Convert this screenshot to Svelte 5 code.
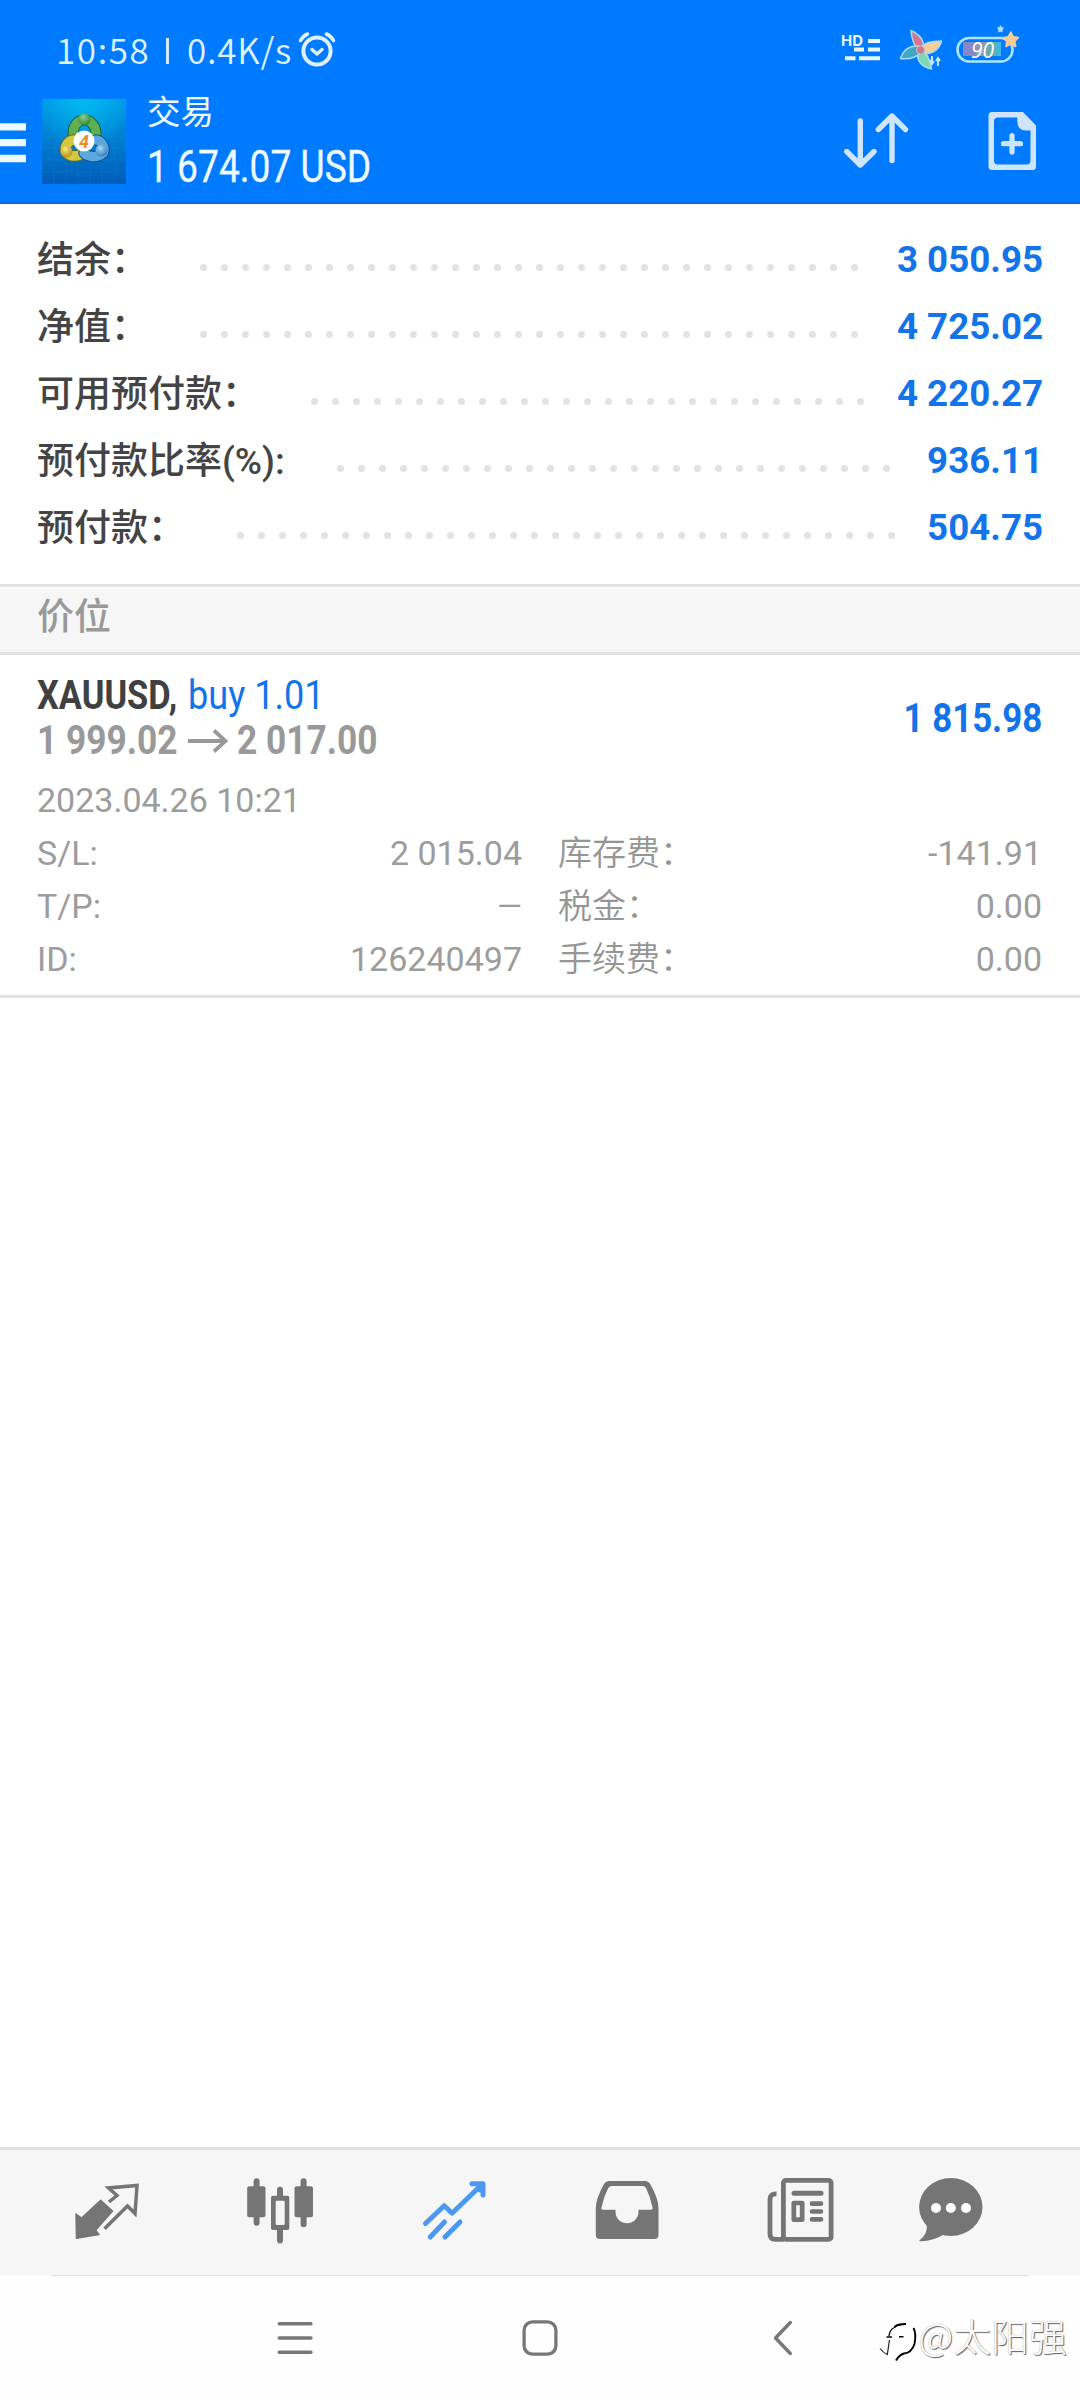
<script>
  const summary = [
    { label: '结余：', value: '3 050.95', dots: 32 },
    { label: '净值：', value: '4 725.02', dots: 32 },
    { label: '可用预付款：', value: '4 220.27', dots: 27 },
    { label: '预付款比率(%):', value: '936.11', dots: 27 },
    { label: '预付款：', value: '504.75', dots: 32 }
  ];
  const details = [
    ['S/L:', '2 015.04', '库存费：', '-141.91'],
    ['T/P:', '—', '税金：', '0.00'],
    ['ID:', '126240497', '手续费：', '0.00']
  ];
</script>

<div class="screen">
  <header>
    <div class="status">
      <span class="clock">10:58</span>
      <span class="bar"></span>
      <span class="speed">0.4K/s</span>
      <svg class="alarm" width="38" height="36" viewBox="0 0 38 36" fill="none" stroke="#dff1ff">
        <circle cx="19" cy="20" r="13.6" stroke-width="4" />
        <path d="M14 18.5l5 4.5 5-4.5" stroke-width="3.4" stroke-linecap="round" stroke-linejoin="round" />
        <path d="M2.5 9.500Q5 5 9.500 3M35.500 9.500Q33 5 28.500 3" stroke-width="3.6" stroke-linecap="round" />
      </svg>
      <svg class="tray" width="190" height="60" viewBox="835 20 190 60">
        <text x="841" y="45.500" class="hd" textLength="22" lengthAdjust="spacingAndGlyphs">HD</text>
        <path d="M868 41H880M854 49.500H864M868 49.500H880M845 58.300H855.500M859 58.300H880" stroke="#e9f6ff" stroke-width="4" />
        <g stroke="#a9d8f5" stroke-width="1.6" stroke-linejoin="round">
          <path d="M917 49Q912 42 911 30.500Q925 37 923.500 49Z" fill="#d8748f" />
          <path d="M921 47Q926 41 941.500 41Q938 54 922 54Z" fill="#f3cf98" />
          <path d="M923 51Q929 55 931.500 69Q917 66 917 52Z" fill="#7fd9b0" />
          <path d="M920 53Q914 60 900.500 58.500Q905 45 919 46Z" fill="#3fa9c4" />
        </g>
        <circle cx="920.500" cy="50" r="4" fill="#c9788e" stroke="#d9b3c9" />
        <path d="M932 56v8M930 60l2 4 2-3M938 66v-8M936 61l2-3 2 3" fill="none" stroke="#c5e6ff" stroke-width="2" />
        <rect x="957.500" y="38" width="55" height="23.500" rx="11.700" fill="none" stroke="#aee6ff" stroke-width="2.600" />
        <rect x="963" y="42" width="13" height="14" fill="#8a86c4" />
        <rect x="976" y="42" width="12" height="14" fill="#8f9bb0" />
        <rect x="988" y="42" width="7" height="14" fill="#5fb0a8" />
        <rect x="995" y="42" width="6" height="14" fill="#45b6dc" />
        <text x="971" y="57.500" class="pct">90</text>
        <path d="M1011 32l2.300 4.800 5.200.6-3.700 3.700.9 5.400-4.900-2.400-4.800 2.600.6-5.400-4-3.600 5.600-1z" fill="#f6cd92" stroke="#f6cd92" stroke-width="1.500" stroke-linejoin="round" />
        <path d="M1000.500 25l1.300 2.300 2.500.5-1.800 2 .2 2.600-2.300-1-2.300 1 .3-2.600-1.700-2 2.500-.5z" fill="#b9dbf3" />
      </svg>
    </div>
    <div class="title-row">
      <svg class="burger" width="26" height="40" viewBox="0 0 26 40"><path d="M0 3.800H26M0 19.600H26M0 35.500H26" stroke="#eef8ff" stroke-width="7.300" /></svg>
      <svg class="logo" width="84" height="85" viewBox="0 0 84 85">
        <defs>
          <linearGradient id="sky" x1="0" y1="0" x2="0" y2="1"><stop offset="0" stop-color="#0095e8" /><stop offset=".45" stop-color="#007fd2" /><stop offset="1" stop-color="#005bb8" /></linearGradient>
          <radialGradient id="shine" cx=".5" cy="0" r=".6"><stop offset="0" stop-color="#00bcf0" /><stop offset="1" stop-color="#00bcf0" stop-opacity="0" /></radialGradient>
          <radialGradient id="gr" cx=".4" cy=".3" r=".8"><stop offset="0" stop-color="#8fd08a" /><stop offset="1" stop-color="#1f7a34" /></radialGradient>
          <radialGradient id="ye" cx=".4" cy=".3" r=".8"><stop offset="0" stop-color="#f6e878" /><stop offset="1" stop-color="#a88410" /></radialGradient>
          <radialGradient id="bl" cx=".4" cy=".3" r=".8"><stop offset="0" stop-color="#a9dcf7" /><stop offset="1" stop-color="#2070bc" /></radialGradient>
        </defs>
        <rect width="84" height="85" fill="url(#sky)" />
        <rect width="84" height="85" fill="url(#shine)" />
        <path d="M12 0V85M24 0V85M36 0V85M48 0V85M60 0V85M72 0V85M0 13H84M0 25H84M0 37H84M0 49H84M0 61H84M0 73H84" stroke="#19a0cc" stroke-opacity=".2" />
        <g fill="none" stroke-linecap="round">
          <path d="M31 36C31 24 37 21 43 21C49 21 55 28 54 38" stroke="#1f5f38" stroke-width="11" />
          <path d="M31 36C31 24 37 21 43 21C49 21 55 28 54 38" stroke="#5fb052" stroke-width="9" />
          <path d="M32 41C26 41 22 48 24 53C28 58 34 58 40 55" stroke="#5d6b2c" stroke-width="11.500" />
          <path d="M32 41C26 41 22 48 24 53C28 58 34 58 40 55" stroke="#d6c83e" stroke-width="9.500" />
          <path d="M54 41C59 41 64 49 61 54C56 59 47 59 42 54" stroke="#124f8d" stroke-width="11.500" />
          <path d="M54 41C59 41 64 49 61 54C56 59 47 59 42 54" stroke="#5ba8e0" stroke-width="9.500" />
        </g>
        <circle cx="42.500" cy="20.500" r="6" fill="url(#gr)" />
        <circle cx="24.500" cy="52.500" r="6" fill="url(#ye)" />
        <circle cx="59.500" cy="51.500" r="6" fill="url(#bl)" />
        <circle cx="42" cy="42" r="10.500" fill="#fff" />
        <text x="42" y="48.500" class="four" text-anchor="middle">4</text>
      </svg>
      <div class="titles">
        <div class="title">交易</div>
        <div class="balance"><span>1 674.07 USD</span></div>
      </div>
      <svg class="sort" width="68" height="60" viewBox="842 110 68 60" fill="none" stroke="#cfe5ff" stroke-width="5.400" stroke-linecap="round" stroke-linejoin="round">
        <path d="M860.300 121V165M846.700 151.500L860.300 165L874 151.500M892 160.500V116M878.300 129.500L892 116L905.500 129.500" />
      </svg>
      <svg class="new" width="52" height="60" viewBox="986 111 52 60">
        <path fill-rule="evenodd" fill="#cfe5ff" d="M992 112H1023L1036 125.500V166.500Q1036 170 1032.500 170H992Q988.500 170 988.500 166.500V115.500Q988.500 112 992 112ZM1017.300 117.500H998Q994 117.500 994 121.500V160.500Q994 164.500 998 164.500H1026.500Q1030.500 164.500 1030.500 160.500V130.500H1026Q1017.300 130.500 1017.300 121.500Z" />
        <path d="M1003.500 143.700H1020.500M1012 135.500V152" stroke="#cfe5ff" stroke-width="5.200" stroke-linecap="round" />
      </svg>
    </div>
  </header>

  <section class="summary">
    {#each summary as row}
      <div class="row">
        <span class="label">{row.label}</span>
        <span class="dots">{#each Array(row.dots) as _}<i></i>{/each}</span>
        <span class="value">{row.value}</span>
      </div>
    {/each}
  </section>

  <div class="section-title">价位</div>

  <section class="position">
    <div class="top">
      <div>
        <div class="line symbol"><b class="sym">XAUUSD,</b><span class="side">buy 1.01</span></div>
        <div class="line prices">
          <b class="from">1 999.02</b>
          <svg width="40" height="24" viewBox="0 0 40 24" fill="none" stroke="#999" stroke-width="3.800"><path d="M0 12H38M26 1.500L37.500 12L26 22.500" /></svg>
          <b class="to">2 017.00</b>
        </div>
      </div>
      <b class="profit">1 815.98</b>
    </div>
    <div class="date">2023.04.26 10:21</div>
    {#each details as d}
      <div class="detail">
        <span>{d[0]}</span><span class="num" class:empty={d[1] === '—'}>{d[1]}</span>
        <span class="cjk">{d[2]}</span><span class="num">{d[3]}</span>
      </div>
    {/each}
  </section>

  <div class="spacer"></div>

  <nav class="tabs">
    <svg width="80" height="80" viewBox="0 0 80 80" fill="none">
      <path d="M42 30L50 23.500L41.500 16L70 13.500L68 41.500L60.500 34L37.500 56.700" stroke="#757575" stroke-width="3.500" />
      <path d="M9 42L14.500 46L33.700 28.300L45.500 39L28.600 58.300L32 62.500L9.500 66.300Z" fill="#757575" stroke="#757575" stroke-width="1.500" stroke-linejoin="round" />
    </svg>
    <svg width="80" height="80" viewBox="0 0 80 80" fill="#757575">
      <rect x="7.200" y="14.300" width="18.300" height="31" rx="2" /><rect x="13.600" y="6.300" width="6" height="47.500" rx="3" />
      <path fill-rule="evenodd" d="M33 23.700H47.500Q49.300 23.700 49.300 25.500V56.200Q49.300 58 47.500 58H33Q31 58 31 56.200V25.500Q31 23.700 33 23.700ZM35.700 30V52Q35.700 53 37 53H43.500Q44.700 53 44.700 52V30Q44.700 28.700 43.500 28.700H37Q35.700 28.700 35.700 30Z" />
      <path d="M37 24V17.700a3 3 0 0 1 6 0V24zM37 57.500V68.500a3 3 0 0 0 6 0V57.500z" />
      <rect x="54.500" y="14.300" width="18.500" height="31" rx="2" /><rect x="60.600" y="6.300" width="6" height="49" rx="3" />
    </svg>
    <svg width="80" height="80" viewBox="0 0 80 80" fill="none" stroke="#4c98f0" stroke-width="5" stroke-linecap="round" stroke-linejoin="round">
      <path d="M11.500 51.500L30.200 33.700L38.100 41.200L68.400 12M58 11.700H69V23M66 12V18" />
      <path d="M16.300 65L30.500 50M31 65L46 50" />
    </svg>
    <svg width="80" height="80" viewBox="0 0 80 80">
      <path fill="#757575" fill-rule="evenodd" d="M22.500 9H58Q61.500 9 63.500 12.500Q71.500 27 71.500 36V63Q71.500 67 67.500 67H13Q8.800 67 8.800 63V36Q8.800 27 16.700 12.500Q18.500 9 22.500 9ZM25 14Q22.500 14 21.300 16Q16.500 25 14.500 35.500Q14 37.700 16 37.700H28.500V39.500C28.500 55 51.500 55 51.500 39.500V37.700H63.500Q66 37.700 65.500 35.500Q63.500 25 59 16Q58 14 55.500 14Z" />
    </svg>
    <svg width="80" height="80" viewBox="0 0 80 80" fill="none" stroke="#757575">
      <rect x="23.400" y="8.400" width="47.700" height="59" rx="2.500" stroke-width="4.800" />
      <path d="M16.500 22Q10 21.500 10 27.500V62Q10 67.400 15.500 67.400H24" stroke-width="4.800" />
      <path d="M34 21.300H61" stroke-width="5" stroke-linecap="round" />
      <rect x="33.800" y="31" width="8.400" height="16.700" stroke-width="4.700" stroke-linejoin="round" />
      <path d="M52 31.700H61M52 39.500H61M52 47.300H61" stroke-width="4.700" stroke-linecap="round" />
    </svg>
    <svg width="80" height="80" viewBox="0 0 80 80" fill="#757575">
      <ellipse cx="40.800" cy="35" rx="31.700" ry="29" />
      <path d="M16.800 53Q18 62 9.300 68.500Q9.500 69.300 10.500 69.300Q24 69 33.500 62.500L28 52Z" />
      <g fill="#fff"><circle cx="26" cy="36" r="5" /><circle cx="40.800" cy="36" r="5" /><circle cx="56" cy="36" r="5" /></g>
    </svg>
  </nav>
  <div class="hairline"></div>
  <nav class="system">
    <svg width="40" height="40" viewBox="0 0 40 40" stroke="#777" stroke-width="3.400" stroke-linecap="round"><path d="M4.200 5.800H36M4.200 20H36M4.200 34.200H36" /></svg>
    <svg width="40" height="40" viewBox="0 0 40 40" fill="none" stroke="#777" stroke-width="3.300"><rect x="4.100" y="3.800" width="31.800" height="32.400" rx="8.500" /></svg>
    <svg class="back" width="40" height="40" viewBox="0 0 40 40" fill="none" stroke="#777" stroke-width="3.300" stroke-linecap="round" stroke-linejoin="round"><path d="M27.300 4.500L12.500 20L27.300 35.500" /></svg>
    <div class="mark">
      <svg width="40" height="46" viewBox="0 0 40 46" fill="none" stroke="#000">
        <path d="M10 21Q11 14 15.500 12.500M15.500 12.500Q16 10 24 9.300" stroke-width="1.300" />
        <path d="M15.500 12Q19 8.800 27 9M34.500 13Q37.500 19 35.500 29Q32.500 38 25 38.500Q20 40 17 45.500" stroke-width="1.900" />
        <path d="M7.500 22H13M20 21.700H24.500" stroke-width="1.500" />
        <path d="M1 33.500Q4 37.500 8.300 39.500L10.500 25" stroke="#222" stroke-width="1.200" />
      </svg>
      <span>@太阳强</span>
    </div>
  </nav>
</div>

<style>
  :global(body) { background: #fff; }
  .screen { width: 1080px; height: 2400px; display: flex; flex-direction: column; background: #fff; overflow: hidden; font-family: Roboto, "Noto Sans CJK SC", sans-serif; }
  svg { display: block; flex: none; }
  span, b { white-space: pre; }
  b { font-weight: 700; }

  header { height: 204px; box-sizing: border-box; background: #007aff; border-bottom: 2px solid #1668da; }
  .status { height: 95px; display: flex; align-items: flex-start; padding-left: 56px; color: #dff2ff; font: 350 35px/40px "Noto Sans CJK SC", sans-serif; }
  .clock, .speed { padding-top: 29px; width: 94px; }
  .clock { letter-spacing: 1.600px; }
  .speed { width: 108px; margin-left: 18px; letter-spacing: .800px; }
  .bar { width: 3px; height: 26px; margin: 38px 0 0 16px; background: #d5ecff; }
  .alarm { margin: 31px 0 0 3px; }
  .tray { margin: 20px 0 0 auto; padding-right: 55px; }
  .hd { font: 700 15px Inter, sans-serif; fill: #e9f6ff; }
  .pct { font: italic 400 21px "Open Sans", sans-serif; fill: #fff; }
  .four { font: italic 700 18px Roboto, sans-serif; fill: #ee8a2c; }
  .title-row { display: flex; align-items: flex-start; }
  .burger { margin-top: 28px; }
  .logo { margin: 4px 0 0 16px; }
  .titles { margin-left: 21px; width: 260px; color: #eefaff; }
  .title { margin-top: -2px; font: 400 33.500px/34px "Noto Sans CJK SC", sans-serif; }
  .balance { margin-top: 12px; font-size: 44px; line-height: 56px; }
  .balance span { display: inline-block; transform: scaleX(.845); transform-origin: 0 50%; -webkit-text-stroke: .3px currentColor; }
  .sort { margin: 15px 0 0 435px; }
  .new { margin: 16px 0 0 76px; }

  .summary { height: 380px; padding: 22px 37px 0 37px; box-sizing: border-box; }
  .row { display: flex; height: 67px; align-items: center; line-height: 67px; font-size: 37px; }
  .label { padding-top: 1px; color: #444; font-weight: 500; }
  .dots { display: flex; gap: 14px; margin: 16px 0 0 52px; }
  .dots i { width: 7px; height: 7px; border-radius: 50%; background: #e2e2e2; }
  .value { margin-left: auto; color: #1274e8; font-weight: 700; font-size: 36.700px; }

  .section-title { height: 71px; box-sizing: border-box; border-top: 3px solid #e2e2e2; border-bottom: 3px solid #e2e2e2; background: #f6f6f6; box-shadow: inset 0 2px #fff; padding-left: 37px; color: #999; font: 500 37px/54px "Noto Sans CJK SC", sans-serif; }

  .position { height: 343px; box-sizing: border-box; padding: 18px 38px 0 37px; border-bottom: 3px solid #e2e2e2; color: #999; }
  .top { display: flex; justify-content: space-between; font-size: 41px; }
  .line { display: flex; align-items: center; height: 45px; line-height: 45px; }
  .line > b, .line > span { transform-origin: 0 50%; transform: scaleX(.86); }
  .line .sym { color: #404040; width: 151px; transform: scaleX(.84); }
  .line .side { color: #1274e8; font-weight: 400; transform: scaleX(.88); }
  .from { width: 151px; }
  .to { margin-left: 9px; }
  .profit { color: #1274e8; line-height: 90px; transform: scaleX(.85); transform-origin: 100% 50%; }
  .date, .detail { height: 53px; line-height: 53px; font-size: 34px; font-weight: 400; color: #9c9c9c; }
  .date { margin-top: 11px; }
  .detail { display: grid; grid-template-columns: 142px 343px 180px 340px; }
  .num { text-align: right; }
  .num.empty { font-size: 32px; }
  .cjk { padding-left: 36px; font-weight: 350; color: #959595; }

  .spacer { flex: 1; }
  .tabs { height: 128px; box-sizing: border-box; border-top: 3px solid #e2e2e2; background: #f6f6f6; padding: 0 66px 1px 20.500px; display: grid; grid-template-columns: repeat(5, 173.300px) 126px; place-items: center; }
  .hairline { height: 1px; margin: 0 51px; background: #e0e0e0; }
  .system { height: 124px; display: flex; align-items: center; padding-left: 274.500px; gap: 205px; background: #fefefe; }
  .back { margin-left: -2px; }
  .mark { display: flex; align-items: center; margin-left: -129px; }
  .mark span { margin-top: -7px; font: 300 38px/50px "Noto Sans CJK SC", sans-serif; color: #fff; text-shadow: 0 0 1px #999, 1px 1px 1px #555; }
</style>
